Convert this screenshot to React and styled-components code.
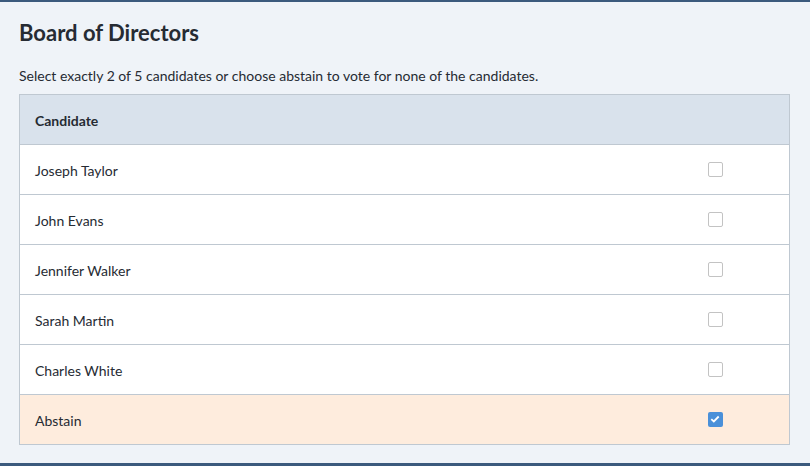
import React, { useState } from "react";
import styled, { createGlobalStyle } from "styled-components";

const GlobalStyle = createGlobalStyle`
  html, body {
    margin: 0;
    padding: 0;
    background: #eff3f8;
    font-family: Lato, "Open Sans", sans-serif;
  }
`;

//outer panel with the dark strips top and bottom
const Panel = styled.section`
  box-sizing: border-box;
  height: 466px;
  width: 810px;
  background: #eff3f8;
  border-top: 2px solid #3b5a7d;
  border-bottom: 3px solid #3b5a7d;
  padding: 18px 20px 0 19px;
`;

const Title = styled.h2`
  margin: 0;
  font-size: 22px;
  font-weight: 700;
  color: #262b33;
  line-height: 26px;
`;

const Hint = styled.p`
  margin: 22px 0 0;
  font-size: 14px;
  line-height: 16px;
  color: #262b33;
`;

const Table = styled.div`
  margin-top: 10px;
  border: 1px solid #bfc8d1;
  border-bottom: none;
`;

const Row = styled.label`
  display: grid;
  grid-template-columns: 1fr 148px;
  align-items: center;
  height: 49px;
  border-bottom: 1px solid #bfc8d1;
  background: ${props => props.bg || "#ffffff"};
  padding-left: 15px;
  padding-top: 2px;
  box-sizing: border-box;
  height: 50px;
  font-size: 14px;
  color: #262b33;
  font-weight: ${props => (props.head ? 700 : 400)};
  cursor: ${props => (props.head ? "default" : "pointer")};
`;

const BoxCell = styled.span`
  display: flex;
  justify-content: center;
  margin-top: -3px;
`;

//checkbox square
const Check = styled.span`
  box-sizing: border-box;
  width: 15px;
  height: 15px;
  border-radius: 2px;
  border: ${props => (props.on ? "none" : "1.5px solid #c3c3c3")};
  background: ${props => (props.on ? "#4a90d9" : "#ffffff")};
  display: flex;
  align-items: center;
  justify-content: center;
`;

const candidates = [
  "Joseph Taylor",
  "John Evans",
  "Jennifer Walker",
  "Sarah Martin",
  "Charles White",
];

function App() {
  const [picked, setPicked] = useState(["Abstain"]);

  function toggle(name) {
    if (picked.includes(name)) setPicked(picked.filter(p => p !== name));
    else setPicked([...picked, name]);
  }

  return (
    <>
      <GlobalStyle />
      <Panel>
        <Title>Board of Directors</Title>
        <Hint>
          Select exactly 2 of 5 candidates or choose abstain to vote for none
          of the candidates.
        </Hint>
        <Table>
          <Row as="div" head bg="#d9e2ec">
            Candidate
          </Row>
          {[...candidates, "Abstain"].map(name => {
            const on = picked.includes(name);
            return (
              <Row
                key={name}
                bg={name === "Abstain" && on ? "#feecdd" : "#ffffff"}
                onClick={() => toggle(name)}
              >
                <span>{name}</span>
                <BoxCell>
                  <Check on={on}>
                    {on && (
                      <svg width="10" height="8" viewBox="0 0 10 8">
                        <path
                          d="M1.3 4.2 L3.8 6.5 L8.7 1.5"
                          fill="none"
                          stroke="#ffffff"
                          strokeWidth="1.8"
                        />
                      </svg>
                    )}
                  </Check>
                </BoxCell>
              </Row>
            );
          })}
        </Table>
      </Panel>
    </>
  );
}

export default App;
